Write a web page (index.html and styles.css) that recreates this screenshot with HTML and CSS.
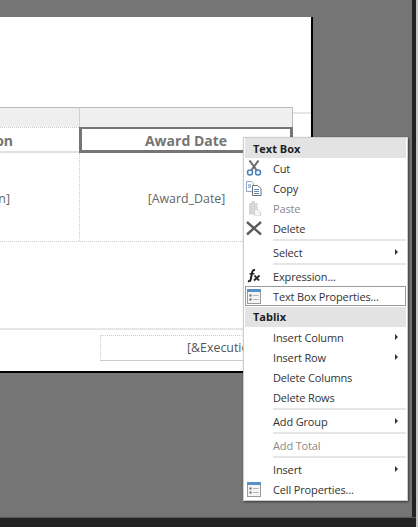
FILE: index.html
```html
<!DOCTYPE html>
<html lang="en">
<head>
    <meta charset="UTF-8">
    <title>Report Designer</title>
    <link rel="stylesheet" href="styles.css">
</head>
<body>
<div class="workspace">
    <div class="report-page">
        <div class="page-head"></div>
        <div class="tablix-wrap">
            <div class="tablix">
                <div class="handle-row">
                    <div class="handle handle-first"></div>
                    <div class="handle"></div>
                </div>
                <div class="header-row">
                    <div class="header-cell header-first">on</div>
                    <div class="header-cell header-selected">Award Date</div>
                </div>
                <div class="data-row">
                    <div class="data-cell data-first">n]</div>
                    <div class="data-cell data-second">[Award_Date]</div>
                </div>
            </div>
            <div class="tablix-tail"></div>
        </div>
        <div class="page-gap"></div>
        <div class="page-foot">
            <div class="foot-box">[&amp;ExecutionTime]</div>
        </div>
    </div>

    <div class="context-menu">
        <div class="menu-title">Text Box</div>
        <div class="menu-item">
            <span class="menu-icon">
                <svg width="16" height="16" viewBox="0 0 16 16">
                    <path d="M3.5 0.5 L10.5 10 M12.5 0.5 L5.5 10" fill="none" stroke="#6a6a6a" stroke-width="2"/>
                    <circle cx="4" cy="12.5" r="2.5" fill="none" stroke="#4a7fc0" stroke-width="1.5"/>
                    <circle cx="12" cy="12.5" r="2.5" fill="none" stroke="#4a7fc0" stroke-width="1.5"/>
                </svg>
            </span>
            <span class="menu-label">Cut</span>
        </div>
        <div class="menu-item">
            <span class="menu-icon">
                <svg width="16" height="16" viewBox="0 0 16 16">
                    <path d="M0.5 1.5 H5.5 L7.5 3.5 V11.5 H0.5 Z" fill="#fff" stroke="#8fa6c0"/>
                    <path d="M6.5 5.5 H11.5 L15 8.5 V15.5 H6.5 Z" fill="#fff" stroke="#707070"/>
                    <path d="M2 5 H5 M2 7 H5 M8 9.5 H13 M8 11.5 H13 M8 13.5 H13" stroke="#5d8cc4"/>
                </svg>
            </span>
            <span class="menu-label">Copy</span>
        </div>
        <div class="menu-item menu-disabled">
            <span class="menu-icon">
                <svg width="16" height="16" viewBox="0 0 16 16">
                    <path d="M3 3 H5.5 V1 H9 V3 H11.5 V14.5 H3 Z" fill="#d6d6d6"/>
                    <path d="M8.5 9.5 H12 L14.5 12 V16 H8.5 Z" fill="#f4f4f4" stroke="#d4d4d4"/>
                </svg>
            </span>
            <span class="menu-label">Paste</span>
        </div>
        <div class="menu-item">
            <span class="menu-icon">
                <svg width="16" height="16" viewBox="0 0 16 16">
                    <path d="M1 2 L15 14.5 M15 2 L1 14.5" fill="none" stroke="#5c5c5c" stroke-width="2.4"/>
                </svg>
            </span>
            <span class="menu-label">Delete</span>
        </div>
        <div class="menu-sep"></div>
        <div class="menu-item menu-arrow">
            <span class="menu-icon"></span>
            <span class="menu-label">Select</span>
        </div>
        <div class="menu-sep"></div>
        <div class="menu-item">
            <span class="menu-icon">
                <svg width="16" height="16" viewBox="0 0 16 16">
                    <path d="M9 2.2 C7 1.6 6.4 3 6 5 L4.8 11 C4.5 13 3.6 13.6 2 13" fill="none" stroke="#222" stroke-width="2"/>
                    <path d="M3.5 5.8 H8.5" stroke="#222" stroke-width="1.4"/>
                    <path d="M8.5 7.5 L13 12.5 M13.5 7.5 L8 12.5" stroke="#222" stroke-width="1.8"/>
                </svg>
            </span>
            <span class="menu-label">Expression...</span>
        </div>
        <div class="menu-item menu-hover">
            <span class="menu-icon">
                <svg width="14" height="15" viewBox="0 0 14 15">
                    <rect x="0.5" y="0.5" width="13" height="14" fill="#f4f4f4" stroke="#9a9a9a"/>
                    <rect x="0" y="0" width="14" height="3" fill="#5b8fc7"/>
                    <path d="M2.5 6.5 H4.5 M2.5 10.5 H4.5" stroke="#666" stroke-width="2"/>
                    <path d="M6 6.5 H11.5 M6 10.5 H11.5" stroke="#b5b5b5"/>
                </svg>
            </span>
            <span class="menu-label">Text Box Properties...</span>
        </div>
        <div class="menu-title menu-title-next">Tablix</div>
        <div class="menu-item menu-arrow">
            <span class="menu-icon"></span>
            <span class="menu-label">Insert Column</span>
        </div>
        <div class="menu-item menu-arrow">
            <span class="menu-icon"></span>
            <span class="menu-label">Insert Row</span>
        </div>
        <div class="menu-item">
            <span class="menu-icon"></span>
            <span class="menu-label">Delete Columns</span>
        </div>
        <div class="menu-item">
            <span class="menu-icon"></span>
            <span class="menu-label">Delete Rows</span>
        </div>
        <div class="menu-sep"></div>
        <div class="menu-item menu-arrow">
            <span class="menu-icon"></span>
            <span class="menu-label">Add Group</span>
        </div>
        <div class="menu-sep"></div>
        <div class="menu-item menu-disabled">
            <span class="menu-icon"></span>
            <span class="menu-label">Add Total</span>
        </div>
        <div class="menu-sep"></div>
        <div class="menu-item menu-arrow">
            <span class="menu-icon"></span>
            <span class="menu-label">Insert</span>
        </div>
        <div class="menu-item">
            <span class="menu-icon">
                <svg width="14" height="15" viewBox="0 0 14 15">
                    <rect x="0.5" y="0.5" width="13" height="14" fill="#f4f4f4" stroke="#9a9a9a"/>
                    <rect x="0" y="0" width="14" height="3" fill="#5b8fc7"/>
                    <path d="M2.5 6.5 H4.5 M2.5 10.5 H4.5" stroke="#666" stroke-width="2"/>
                    <path d="M6 6.5 H11.5 M6 10.5 H11.5" stroke="#b5b5b5"/>
                </svg>
            </span>
            <span class="menu-label">Cell Properties...</span>
        </div>
    </div>
</div>
<div class="status-strip"></div>
</body>
</html>
```

FILE: styles.css
```css
html, body {
    margin: 0;
    height: 100%;
    overflow: hidden;
}
body {
    display: flex;
    flex-direction: column;
    box-sizing: border-box;
    border-right: 2px solid #c8c8c8;
    background-color: #757575;
    font-family: 'Open Sans', 'Noto Sans', sans-serif;
    color: #333;
}
.workspace {
    position: relative;
    flex: 1;
    padding-top: 17px;
    border-right: 4px solid #222;
}
.status-strip {
    height: 10px;
    background-color: #222;
    border-top: 1px solid #555;
    box-sizing: border-box;
}
.report-page {
    width: 311px;
    height: 354px;
    display: flex;
    flex-direction: column;
    background-color: #fff;
    border-right: 2px solid #000;
    border-bottom: 2px solid #000;
}
.page-head {
    height: 90px;
}
.tablix-wrap {
    display: flex;
}
.tablix {
    width: 293px;
    flex: none;
}
.tablix-tail {
    flex: 1;
    height: 2px;
    margin-top: 5px;
    background-color: #e6e6e6;
}
.handle-row {
    display: grid;
    grid-template-columns: 80px 213px;
    height: 20px;
}
.handle {
    background-color: #efefef;
    border-top: 1px solid #bbb;
    border-right: 1px solid #bbb;
    box-sizing: border-box;
}
.handle-first {
    border-right: 1px solid #d0d0d0;
}
.header-row {
    display: grid;
    grid-template-columns: 79px 214px;
    height: 26px;
}
.header-cell {
    display: flex;
    align-items: center;
    justify-content: center;
    padding-top: 2px;
    font-size: 14px;
    font-weight: 700;
    color: #757575;
    box-sizing: border-box;
}
.header-first {
    justify-content: flex-end;
    padding-right: 66px;
    border-bottom: 2px solid #e0e0e0;
    border-top: 1px dotted #ccc;
}
.header-selected {
    border: 3px solid #757575;
    border-width: 2px 3px 3px 3px;
}
.data-row {
    display: grid;
    grid-template-columns: 80px 213px;
    height: 89px;
    border-bottom: 1px dotted #ccc;
    box-sizing: border-box;
}
.data-cell {
    display: flex;
    align-items: center;
    padding-top: 3px;
    font-size: 12.4px;
    color: #666;
}
.data-first {
    justify-content: flex-end;
    padding-right: 69px;
    border-right: 1px dotted #ccc;
}
.data-second {
    justify-content: center;
}
.page-gap {
    height: 86px;
}
.page-foot {
    flex: 1;
    border-top: 2px solid #e6e6e6;
    padding-top: 5px;
    padding-left: 100px;
}
.foot-box {
    width: 300px;
    height: 26px;
    box-sizing: border-box;
    border: 1px dotted #ccc;
    border-bottom: 1px solid #ccc;
    font-size: 12.4px;
    line-height: 24px;
    padding-left: 86px;
    color: #555;
    white-space: nowrap;
}
.context-menu {
    position: absolute;
    left: 243px;
    top: 137px;
    width: 165px;
    height: 364px;
    box-sizing: border-box;
    padding: 0 1px;
    background-color: #fff;
    box-shadow: 1px 1px 2px rgba(0, 0, 0, 0.5);
    border: 1px solid #ccc;
    font-size: 11px;
    letter-spacing: -0.15px;
    overflow: hidden;
}
.menu-title {
    height: 20px;
    line-height: 22px;
    padding-left: 8px;
    background-color: #e3e3e3;
    font-weight: 700;
    letter-spacing: 0;
    color: #1e1e1e;
}
.menu-title-next {
    margin-top: 1px;
    line-height: 20px;
}
.menu-item {
    position: relative;
    display: flex;
    align-items: center;
    height: 20px;
    color: #333;
    box-sizing: border-box;
}
.menu-icon {
    width: 18px;
    height: 18px;
    display: flex;
    align-items: center;
    justify-content: center;
    margin-right: 10px;
    flex: none;
}
.menu-disabled {
    color: #8a8a8a;
}
.menu-hover {
    border: 1px solid #9a9a9a;
}
.menu-hover .menu-icon {
    margin-left: -1px;
}
.menu-arrow::after {
    content: "";
    position: absolute;
    right: 8px;
    top: 7px;
    border-left: 3px solid #333;
    border-top: 3px solid transparent;
    border-bottom: 3px solid transparent;
}
.menu-sep {
    height: 2px;
    margin: 1px 0 1px 28px;
    background-color: #e6e6e6;
}
```
